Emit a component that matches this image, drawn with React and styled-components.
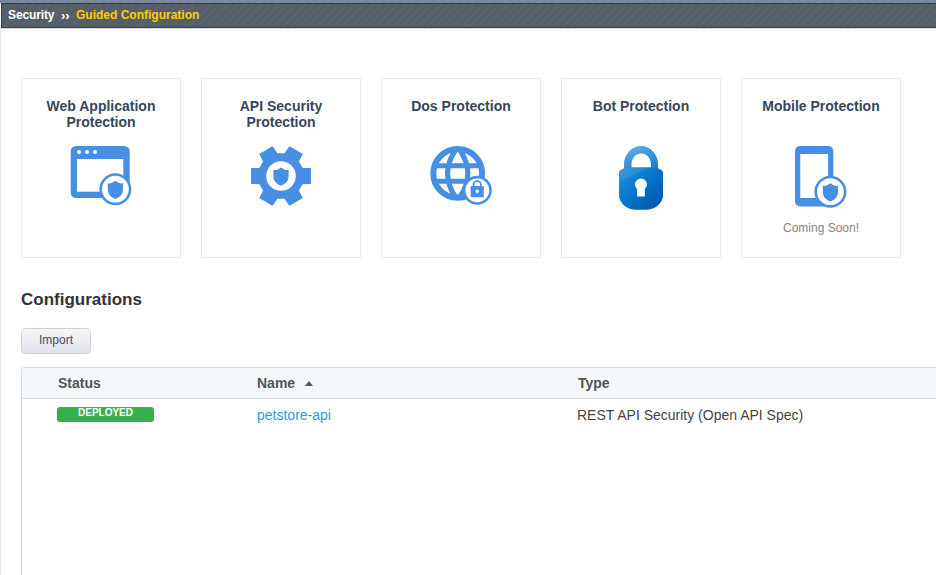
import React from "react";
import styled, { createGlobalStyle } from "styled-components";

const BLUE = "#468fe2";

const GlobalStyle = createGlobalStyle`
  * { box-sizing: border-box; }
  body {
    margin: 0;
    background: #fff;
    color: #333;
    font-family: "Liberation Sans", Arial, sans-serif;
    overflow: hidden;
  }
`;

const Page = styled.div`
  height: 575px;
  display: flex;
  flex-direction: column;
`;

const TopStrip = styled.div`
  height: 3px;
  background: repeating-linear-gradient(135deg, #73859b 0 3px, #788a9f 3px 6px);
`;

const Breadcrumb = styled.nav`
  height: 25px;
  margin-left: 1px;
  padding: 0 0 2px 6px;
  display: flex;
  align-items: center;
  border: 1px solid #373e46;
  border-right: 0;
  background: repeating-linear-gradient(135deg, #555e67 0 3px, #59626c 3px 6px);
  font-size: 12px;
  font-weight: bold;
  white-space: nowrap;
`;

const Crumb = styled.span`
  width: ${(p) => p.$width}px;
  color: ${(p) => (p.$current ? "#fc0" : "#fff")};
  letter-spacing: ${(p) => (p.$current ? 0 : -0.12)}px;
`;

const Separator = styled.span`
  width: 15px;
  padding-top: 1px;
  color: #fff;
  font-size: 13px;
  line-height: 13px;
`;

const Content = styled.main`
  flex: 1;
  display: flex;
  flex-direction: column;
  align-items: flex-start;
  border-left: 1px solid #e4e2dd;
  border-top: 1px solid #dcdcdc;
  padding: 49px 0 0 20px;
`;

const Cards = styled.section`
  display: flex;
  gap: 20px;
`;

const Card = styled.article`
  width: 160px;
  height: 180px;
  padding-top: 19px;
  display: flex;
  flex-direction: column;
  align-items: center;
  border: 1px solid #e6eaef;
`;

const CardTitle = styled.h3`
  width: 130px;
  height: 46px;
  margin: 0;
  color: #37465a;
  font-size: 14px;
  line-height: 16px;
  text-align: center;
`;

const Icon = styled.svg`
  width: 64px;
  height: 68px;
  flex: none;
`;

const CardNote = styled.p`
  margin: 8px 0 0;
  color: #858585;
  font-size: 12px;
  line-height: 16px;
`;

const Heading = styled.h2`
  margin: 32px 0 0;
  height: 38px;
  color: #333;
  font-size: 17px;
  line-height: 20px;
`;

const ImportButton = styled.button`
  width: 70px;
  height: 26px;
  padding: 0 0 2px;
  border: 1px solid #cdd1da;
  border-radius: 4px;
  background: linear-gradient(#f4f6f9, #dfe2e9);
  color: #4b4f5c;
  font: 12px "Liberation Sans", Arial, sans-serif;
`;

const Table = styled.div`
  align-self: stretch;
  flex: 1;
  margin-top: 13px;
  border: 1px solid #d5d7da;
  border-width: 1px 0 0 1px;
  border-top-left-radius: 4px;
  overflow: hidden;
`;

const Row = styled.div`
  display: grid;
  grid-template-columns: 200px 320px 1fr;
  align-items: center;
  height: 32px;
  padding-left: 35px;
  color: #444;
  font-size: 14px;
`;

const HeaderRow = styled(Row)`
  height: 31px;
  padding-left: 36px;
  grid-template-columns: 199px 321px 1fr;
  border-bottom: 1px solid #d5d7da;
  background: #f4f8fb;
  color: #555;
  font-weight: bold;
`;

const HeaderLabel = styled.span`
  display: flex;
  align-items: center;
  gap: 10px;
  line-height: 16px;
`;

const SortArrow = styled.svg`
  width: 8px;
  height: 5px;
`;

const Badge = styled.span`
  width: 97px;
  height: 15px;
  margin-top: -2px;
  border-radius: 3px;
  background: #35b04a;
  color: #fff;
  font-size: 10px;
  font-weight: bold;
  line-height: 12px;
  text-align: center;
`;

const NameLink = styled.a`
  color: #2f9bd3;
  text-decoration: none;
`;

function Shield({ cx, cy }) {
  return (
    <path
      transform={`translate(${cx} ${cy})`}
      fill={BLUE}
      d="M0-9C1.3-8 2.5-7.1 3.7-6.7C5-6.3 6.2-6.2 7.6-6.4V-.5C7.6 4.8 4.4 7.6 0 9.3C-4.4 7.6-7.6 4.8-7.6-.5V-6.4C-6.2-6.2-5-6.3-3.7-6.7C-2.5-7.1-1.3-8 0-9Z"
    />
  );
}

function ShieldBadge({ cx, cy }) {
  return (
    <>
      <circle cx={cx} cy={cy} r="14.7" fill="#fff" stroke={BLUE} strokeWidth="2.6" />
      <Shield cx={cx} cy={cy + 0.5} />
    </>
  );
}

function WebIcon() {
  return (
    <Icon viewBox="0 0 64 68">
      <rect x="1.7" y="2" width="59" height="52" rx="5.5" fill={BLUE} />
      <rect x="8" y="15" width="46.3" height="32.7" fill="#fff" />
      {[10, 18, 26].map((x) => (
        <circle key={x} cx={x} cy="8" r="2" fill="#fff" />
      ))}
      <ShieldBadge cx={46.4} cy={45.2} />
    </Icon>
  );
}

const gearPoints = Array.from({ length: 6 }, (_, i) => {
  const place = (deg, r, t) => {
    const a = (deg * Math.PI) / 180;
    const x = 32 + r * Math.cos(a) - t * Math.sin(a);
    const y = 32 + r * Math.sin(a) + t * Math.cos(a);
    return `${x.toFixed(2)},${y.toFixed(2)}`;
  };
  return [
    place(i * 60, 29, -6.9),
    place(i * 60, 29, 6.9),
    place(i * 60 + 30, 21.8, -4.1),
    place(i * 60 + 30, 21.8, 4.1),
  ].join(" ");
}).join(" ");

function GearIcon() {
  return (
    <Icon viewBox="0 0 64 68">
      <polygon points={gearPoints} fill={BLUE} stroke={BLUE} strokeWidth="2" strokeLinejoin="round" />
      <circle cx="32" cy="32" r="14.8" fill="#fff" />
      <Shield cx={32} cy={32.4} />
    </Icon>
  );
}

function GlobeIcon() {
  return (
    <Icon viewBox="0 0 64 68">
      <g fill="none" stroke={BLUE} strokeWidth="5.2">
        <circle cx="28.7" cy="29.4" r="24.4" strokeWidth="6" />
        <path d="M5 21.8H52M5 37.3H52" strokeWidth="5" />
        <path d="M27 5.5C21.5 13 18.6 21 18.6 29.4S21.5 46 27 53.5M30.4 5.5C35.9 13 38.8 21 38.8 29.4S35.9 46 30.4 53.5" />
      </g>
      <circle cx="48.3" cy="46.3" r="13.2" fill="#fff" stroke={BLUE} strokeWidth="2.6" />
      <path d="M44.5 43V40.8a3.7 3.7 0 0 1 7.4 0V43" fill="none" stroke={BLUE} strokeWidth="1.7" />
      <rect x="41.6" y="42" width="13.2" height="11.2" rx="1" fill={BLUE} />
      <circle cx="48.2" cy="47.2" r="1.6" fill="#fff" />
      <path d="M48.2 47V49.4" stroke="#fff" strokeWidth="1" />
    </Icon>
  );
}

const LOCK_BODY =
  "M15 23.5H49C49.5 25 50.5 25.2 51.5 25.5C53.3 26 54 27.5 54 29.5V51C54 60 45.5 65.7 37 65.7H27C18.5 65.7 10 60 10 51V29.5C10 27.5 10.7 26 12.5 25.5C13.5 25.2 14.5 25 15 23.5Z";

function LockIcon() {
  return (
    <Icon viewBox="0 0 64 68">
      <defs>
        <linearGradient id="lockBody" x1="0" y1="0" x2="1" y2="1">
          <stop offset="0" stopColor="#2b95d9" />
          <stop offset=".38" stopColor="#087bd0" />
          <stop offset="1" stopColor="#0052a8" />
        </linearGradient>
        <linearGradient id="lockShackle" x1="0" y1="0" x2=".6" y2="1">
          <stop offset="0" stopColor="#6ab3e5" />
          <stop offset="1" stopColor="#1a80cf" />
        </linearGradient>
        <clipPath id="lockClip">
          <path d={LOCK_BODY} />
        </clipPath>
      </defs>
      <path
        fill="url(#lockShackle)"
        fillRule="evenodd"
        d="M15 26V20C15 10 23 2 32 2S49 10 49 20V26ZM22.5 23.4H42V21C42 14 37.7 9.5 32.2 9.5S22.5 14 22.5 21Z"
      />
      <path fill="url(#lockBody)" d={LOCK_BODY} />
      <path clipPath="url(#lockClip)" fill="#fff" opacity=".08" d="M8 22H42C33 27 20 34 8 38Z" />
      <path fill="#fff" d="M28.1 52.4V45.1A6 6 0 1 1 35.8 45.1V52.4Z" />
    </Icon>
  );
}

function MobileIcon() {
  return (
    <Icon viewBox="0 0 64 68">
      <rect x="6" y="2" width="38.3" height="60.4" rx="5" fill={BLUE} />
      <rect x="11.3" y="10" width="27.8" height="44" fill="#fff" />
      <ShieldBadge cx={41.4} cy={47.7} />
    </Icon>
  );
}

const protections = [
  { title: "Web Application Protection", Drawing: WebIcon },
  { title: "API Security Protection", Drawing: GearIcon },
  { title: "Dos Protection", Drawing: GlobeIcon },
  { title: "Bot Protection", Drawing: LockIcon },
  { title: "Mobile Protection", Drawing: MobileIcon, note: "Coming Soon!" },
];

export default function App() {
  return (
    <Page>
      <GlobalStyle />
      <TopStrip />
      <Breadcrumb>
        <Crumb $width={53}>Security</Crumb>
        <Separator>››</Separator>
        <Crumb $current>Guided Configuration</Crumb>
      </Breadcrumb>
      <Content>
        <Cards>
          {protections.map(({ title, Drawing, note }) => (
            <Card key={title}>
              <CardTitle>{title}</CardTitle>
              <Drawing />
              {note && <CardNote>{note}</CardNote>}
            </Card>
          ))}
        </Cards>
        <Heading>Configurations</Heading>
        <ImportButton>Import</ImportButton>
        <Table>
          <HeaderRow>
            <HeaderLabel>Status</HeaderLabel>
            <HeaderLabel>
              Name
              <SortArrow viewBox="0 0 8 5">
                <path d="M0 5L4 0L8 5Z" fill="#555" />
              </SortArrow>
            </HeaderLabel>
            <HeaderLabel>Type</HeaderLabel>
          </HeaderRow>
          <Row>
            <Badge>DEPLOYED</Badge>
            <NameLink>petstore-api</NameLink>
            <span>REST API Security (Open API Spec)</span>
          </Row>
        </Table>
      </Content>
    </Page>
  );
}
